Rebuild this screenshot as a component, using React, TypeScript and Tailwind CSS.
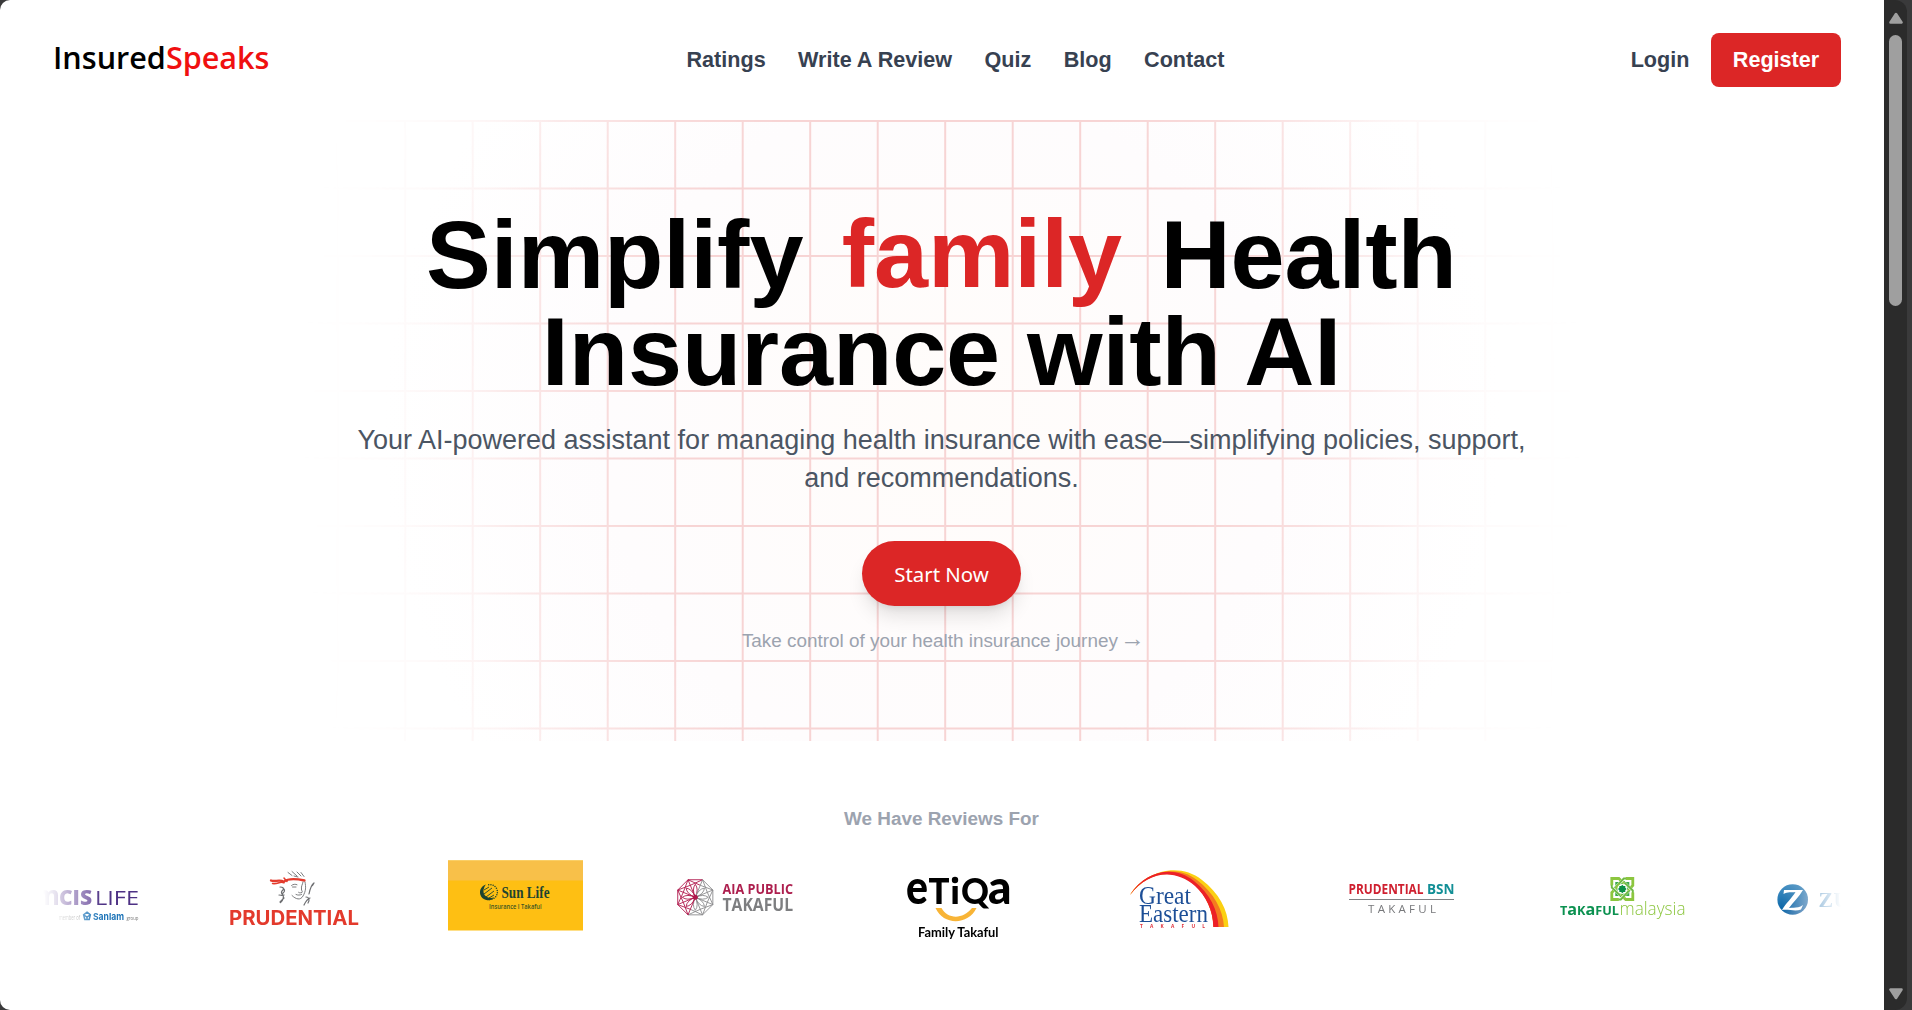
import React from "react";

const NAV = ["Ratings", "Write A Review", "Quiz", "Blog", "Contact"];

function Slot({ children }: { children: React.ReactNode }) {
  return (
    <svg width="135" height="120" viewBox="0 0 135 120" className="shrink-0 overflow-visible">
      {children}
    </svg>
  );
}

type WordProps = {
  x: number;
  y: number;
  w: number;
  size: number;
  fill: string;
  font?: string;
  weight?: number;
  spread?: boolean;
  children: string;
};

function Word({ x, y, w, size, fill, font = "Open Sans", weight = 400, spread = false, children }: WordProps) {
  return (
    <text
      x={x}
      y={y}
      textLength={w}
      lengthAdjust={spread ? "spacing" : "spacingAndGlyphs"}
      fontSize={size}
      fill={fill}
      fontFamily={`"${font}", sans-serif`}
      fontWeight={weight}
    >
      {children}
    </text>
  );
}

function McisLife() {
  return (
    <Slot>
      <Word x={29} y={65} w={26} size={27} fill="#8a76b4" font="Open Sans" weight={700}>m</Word>
      <Word x={54} y={65} w={33} size={20.5} fill="#6a4c9c" font="Open Sans" weight={800}>CIS</Word>
      <Word x={90} y={65} w={44} size={20} fill="#4d3184" font="Open Sans" weight={400}>LIFE</Word>
      <Word x={54} y={80} w={21} size={6.5} fill="#999" font="Open Sans">member of</Word>
      <path d="M82 72.2l3.4 2.6-1.2 4.6h-4.4l-1.2-4.6z M79 75l3 2 3-2 M82 77v3" fill="none" stroke="#1d74b8" strokeWidth="1.5" />
      <Word x={88} y={80.2} w={31} size={9.6} fill="#1d74b8" font="Inter" weight={700}>Sanlam</Word>
      <Word x={121.5} y={80} w={12} size={5.5} fill="#777" font="Open Sans">group</Word>
    </Slot>
  );
}

function Prudential() {
  return (
    <Slot>
      <g fill="none" strokeLinecap="round" strokeLinejoin="round">
        <g stroke="#e33a2c">
          <path d="M45 40.500c4 1.800 8-1.600 13 1.200 3.500-3 12-3 20.500-1.200" strokeWidth="2.300" />
          <path d="M46.500 43.500c5 1 7-2.500 11.500-.8M58 38l3 3.500" strokeWidth="1.500" />
        </g>
        <g stroke="#6d6e71" strokeWidth=".9">
          <path d="M62 32.500l4 3M66 31.500l5 4.500M71 32l4 4M75 32.500l3 4M68 36l4 1" />
          <path d="M65.500 45.500c1.500-1.500 4-1.500 5.500-.8M66.500 47h3.500M77 42c-.5 3-2 4-1.500 7-.5 1.500 1.500 2.300.5 3.500-2 .6-3 .3-3.500-.2M70 54.500c2 1 4 .6 5.500 0M79 42c1 5 1 9-2 14-2.500 4.500-7 3.500-11-.5" />
          <path d="M54 47c3 0 4 1 3 3-2 1.500-2 3-.5 4.500 1.500 2 1 5-2 8M57 48c3 3 1 4-.5 5.500M53 55c2 0 3 1 5 0M54 62l4-4" strokeWidth="1.200" />
          <path d="M88 43c-3 2-4 6-5 11M88 43l-1.500 2.500M80 57c3 0 4 3 2 6M84 58c-3 1-4 3-6 7" strokeWidth="1.200" />
        </g>
      </g>
      <Word x={3} y={85} w={130} size={19.8} fill="#e33a2c" font="Inter" weight={700}>PRUDENTIAL</Word>
    </Slot>
  );
}

function SunLife() {
  const rays = Array.from({ length: 14 }, (_, i) => (-100 + i * 17.5) * (Math.PI / 180));
  return (
    <Slot>
      <rect y="20.500" width="135" height="70" fill="#febf13" />
      <rect y="20.500" width="135" height="20" fill="#f8c049" />
      <path d="M38 44.500a8 8 0 1 0 8 13c-5 1.500-10-1-10.500-5.500-.2-3 .8-5.500 2.500-7.500z" fill="#1d4430" />
      <path d="M36 54l8-6M38 57l8-6M36 50l5-3M41 58l5-3" stroke="#1d4430" strokeWidth=".9" />
      {rays.map((a) => (
        <circle key={a} cx={42 + Math.cos(a) * 7.4} cy={52 + Math.sin(a) * 7.4} r=".75" fill="#1d4430" />
      ))}
      <Word x={53.5} y={57.7} w={48} size={16.3} fill="#1d4430" font="Liberation Serif" weight={700}>Sun Life</Word>
      <Word x={41} y={69} w={52.5} size={6.5} fill="#3d5522" font="Open Sans" weight={600}>Insurance  I  Takaful</Word>
    </Slot>
  );
}

function AiaPublic() {
  const pt = (r: number, deg: number) =>
    `${26.3 + r * Math.cos((deg * Math.PI) / 180)} ${57.3 + r * Math.sin((deg * Math.PI) / 180)}`;
  return (
    <Slot>
      {Array.from({ length: 8 }, (_, i) => {
        const a = i * 45 + 22.5;
        const crimson = i >= 2 && i <= 5;
        return (
          <path
            key={i}
            d={`M${pt(19, a)}L${pt(19, a + 45)}L${pt(13, a)}M${pt(19, a)}L${pt(13, a + 45)}M${pt(0, 0)}L${pt(19, a)}M${pt(0, 0)}Q${pt(9, a - 2)} ${pt(13, a + 22.5)}Q${pt(9, a + 47)} ${pt(0, 0)}`}
            fill="none"
            stroke={crimson ? "#b0184c" : "#8b8b8d"}
            strokeWidth=".9"
            strokeLinejoin="round"
          />
        );
      })}
      <circle cx="26.300" cy="57.300" r="2.500" fill="#b0184c" />
      <Word x={53.5} y={54} w={70.5} size={14.2} fill="#ad1f4e" font="Open Sans" weight={700}>AIA PUBLIC</Word>
      <Word x={53.5} y={71} w={70.5} size={17.8} fill="#7d7e80" font="Open Sans" weight={700}>TAKAFUL</Word>
    </Slot>
  );
}

function Etiqa() {
  return (
    <Slot>
      <Word x={15} y={64} w={22} size={48} fill="#000" font="Lato" weight={900}>e</Word>
      <Word x={37.5} y={64} w={21} size={36.5} fill="#000" font="Lato" weight={900}>T</Word>
      <rect x="61.500" y="46" width="5.200" height="18" fill="#000" />
      <circle cx="64" cy="40" r="3.200" fill="#000" />
      <Word x={70} y={64} w={28} size={36} fill="#000" font="Lato" weight={900}>Q</Word>
      <Word x={97} y={64} w={23.5} size={48} fill="#000" font="Lato" weight={900}>a</Word>
      <path d="M44.500 68h6c6 11 21 12 30.500 0h4.500c-8 17-33 18-41 0z" fill="#f8b436" />
      <Word x={27} y={97} w={80.5} size={13.2} fill="#000" font="Lato" weight={700}>Family Takaful</Word>
    </Slot>
  );
}

function GreatEastern() {
  return (
    <Slot>
      <path d="M18 55C32 32 66 21 90 40c17 13 26 30 26.500 47h-15C101 70 94 56 84 46 64 27 36 31 18 55z" fill="#fbd012" />
      <path d="M18 55C32 32 64 23 85 40c17 13 26 30 27 47h-10.500C101 70 94 56 84 46 64 27 36 31 18 55z" fill="#f47b20" />
      <path d="M18 55C34 30 62 25 82 41c16 13 24 29 24.500 46h-5.200C101 70 94 56 83 46 63 28 36 31 18 55z" fill="#ec2027" />
      <Word x={27} y={64} w={52} size={24.5} fill="#1d4f97" font="Liberation Serif">Great</Word>
      <Word x={27} y={82} w={69} size={24.5} fill="#1d4f97" font="Liberation Serif">Eastern</Word>
      <Word x={28} y={88} w={65} size={4.8} fill="#e0303a" font="Open Sans" weight={700} spread>TAKAFUL</Word>
    </Slot>
  );
}

function PrudentialBsn() {
  return (
    <Slot>
      <Word x={15.5} y={53.7} w={75} size={14.4} fill="#cf2030" font="Open Sans" weight={700}>PRUDENTIAL</Word>
      <Word x={94} y={53.7} w={27.5} size={14.4} fill="#128f96" font="Open Sans" weight={700}>BSN</Word>
      <rect x="16" y="59" width="105" height="1" fill="#808285" />
      <Word x={35} y={73} w={68} size={11.5} fill="#77787b" font="Open Sans" spread>TAKAFUL</Word>
    </Slot>
  );
}

function TakafulMalaysia() {
  return (
    <Slot>
      <g transform="translate(67.300 49)">
        <path d="M0-10L3-7H7V-3L10 0 7 3V7H3L0 10-3 7H-7V3L-10 0-7-3V-7H-3z" fill="#3aaa4a" />
        {[0, 90, 180, 270].map((r) => (
          <g key={r} transform={`rotate(${r})`} fill="none">
            <path d="M-10.500 -3.500v-7h7L5 -2.500" stroke="#8cc63f" strokeWidth="2.800" />
            <path d="M-6.500 -2L1.500 -10h2.500" stroke="#fff" strokeWidth="2.600" />
            <path d="M-6.500 -2L1.500 -10.500h2.500" stroke="#6fba45" strokeWidth="1.900" />
          </g>
        ))}
        <circle r="5" fill="#fff" />
        <path d="M-3-3h6v6h-6zM0-4.300L4.300 0 0 4.300-4.300 0z" fill="#0b8f47" />
      </g>
      <g fill="#0b9150" fontFamily='"Open Sans", sans-serif' fontWeight="700">
        <text x="5" y="75" textLength="59" lengthAdjust="spacingAndGlyphs">
          <tspan fontSize="12.500">T</tspan>
          <tspan fontSize="16">a</tspan>
          <tspan fontSize="12.500">K</tspan>
          <tspan fontSize="16">a</tspan>
          <tspan fontSize="12.500">FUL</tspan>
        </text>
      </g>
      <Word x={64.5} y={75} w={66} size={18} fill="#8cc63f" weight={300}>malaysia</Word>
    </Slot>
  );
}

function Zurich() {
  return (
    <Slot>
      <defs>
        <linearGradient id="zurich-disc" x1="0" y1="0" x2="1" y2="1">
          <stop offset="0" stopColor="#4f97c8" />
          <stop offset=".45" stopColor="#0b67a8" />
          <stop offset="1" stopColor="#1d5f9f" />
        </linearGradient>
      </defs>
      <circle cx="16.700" cy="59.500" r="15.300" fill="url(#zurich-disc)" />
      <path d="M8 50h19c-4 7-10 12-14 18 5-1 9 1 14-3l-2 4.500c-6 2.500-12-.5-19 .5 4-7 10-12 13.500-18-4 .5-8-.5-12 2z" fill="#fff" />
      <Word x={42.5} y={67} w={90} size={22} fill="#1d6fb0" font="Liberation Serif" weight={700} spread>ZURICH</Word>
    </Slot>
  );
}

function ScrollArrow({ down = false }: { down?: boolean }) {
  return (
    <svg width="14" height="12" viewBox="0 0 14 12" className={down ? "rotate-180" : ""}>
      <path d="M7 2L12.500 10.500H1.500z" fill="#9f9f9f" stroke="#9f9f9f" strokeWidth="2.600" strokeLinejoin="round" />
    </svg>
  );
}

export default function App() {
  return (
    <div className="flex h-[1010px] w-[1912px] overflow-hidden bg-[#3a3a3b] font-['Liberation_Sans',Arial,sans-serif]">
      <div className="flex w-[1884px] shrink-0 flex-col rounded-l-[10px] bg-white">
        <header className="grid h-[120px] shrink-0 grid-cols-[632.5px_auto_1fr] items-center pr-[43px] pl-[54px] text-[21.6px] leading-[32.4px] font-bold text-[#374151]">
          <svg width="216" height="40" viewBox="0 0 216 40" className="overflow-visible">
            <text x="-1" y="29" textLength="216.500" lengthAdjust="spacingAndGlyphs" fontSize="30.500" fontWeight="600" stroke="none" fontFamily='"Open Sans", "Noto Sans", sans-serif'>
              <tspan fill="#000">Insured</tspan>
              <tspan fill="#f01010">Speaks</tspan>
            </text>
          </svg>
          <nav className="flex gap-[32.4px]">
            {NAV.map((item) => (
              <a key={item}>{item}</a>
            ))}
          </nav>
          <div className="flex items-center justify-end gap-[21.6px]">
            <a>Login</a>
            <button className="flex h-[54px] w-[130px] items-center justify-center rounded-lg bg-[#dc2626] text-white">Register</button>
          </div>
        </header>

        <section className="relative h-[621px] shrink-0">
          <div className="absolute inset-0 bg-[radial-gradient(circle_560px_at_50%_50%,#fffcfa_0%,#fefcfd_60%,#ffffff_100%)]" />
          <div className="absolute inset-0 [background-image:linear-gradient(to_right,#f7d4d4_2px,transparent_2px),linear-gradient(to_bottom,#f7d4d4_2px,transparent_2px)] [background-position:-0.8px_0px] [background-size:67.5px_67.5px] [mask-image:radial-gradient(ellipse_640px_1000px_at_50%_50%,#000_40%,rgb(0_0_0/.85)_52%,rgb(0_0_0/.55)_65%,rgb(0_0_0/.25)_75%,rgb(0_0_0/.1)_85%,rgb(0_0_0/.03)_94%,transparent_100%)]" />
          <div className="relative flex flex-col items-center pt-[86px] pr-[1px] text-center">
            <h1 className="w-[1200px] text-[97.2px] leading-[97.2px] font-bold tracking-[-0.1px] text-black">
              Simplify <span className="relative -top-px mx-[11.5px] text-[#dc2626]">family</span> Health
              <br />
              Insurance with AI
            </h1>
            <p className="mt-[21.5px] w-[1210px] text-[27px] leading-[37.8px] text-[#4b5563]">
              Your AI-powered assistant for managing health insurance with ease—simplifying policies, support, and recommendations.
            </p>
            <button className="mt-[43px] flex h-[65px] w-[159px] items-center justify-center rounded-full bg-[#dc2626] pt-[2px] font-['Noto_Sans',sans-serif] text-[20.4px] text-white shadow-[0_13px_20px_-4px_rgb(0_0_0/.12),0_5px_8px_-5px_rgb(0_0_0/.12)]">
              Start Now
            </button>
            <p className="mt-[21px] text-[18.9px] leading-[27px] text-[#9ca3af]">
              Take control of your health insurance journey <span className="-mr-1 -ml-[3px] inline-block text-[25px] leading-[20px]">→</span>
            </p>
          </div>
        </section>

        <section className="flex flex-col pt-[64px]">
          <h2 className="pr-px text-center text-[18.9px] leading-[27px] font-bold text-[#9ca3af]">We Have Reviews For</h2>
          <div className="mx-[43px] mt-[8px] flex overflow-hidden [mask-image:linear-gradient(to_right,transparent,#000_60px,#000_calc(100%-60px),transparent)]">
            <div className="-ml-[38px] flex shrink-0 gap-[86.4px]">
              <McisLife />
              <Prudential />
              <SunLife />
              <AiaPublic />
              <Etiqa />
              <GreatEastern />
              <PrudentialBsn />
              <TakafulMalaysia />
              <Zurich />
            </div>
          </div>
        </section>
      </div>

      <div className="flex w-[23px] shrink-0 flex-col items-center rounded-r-[12px] bg-[#2b2b2b] pt-[12px] pb-[10px]">
        <ScrollArrow />
        <div className="mt-[11px] mb-auto h-[271px] w-[13px] rounded-full bg-[#9f9f9f]" />
        <ScrollArrow down />
      </div>
    </div>
  );
}
